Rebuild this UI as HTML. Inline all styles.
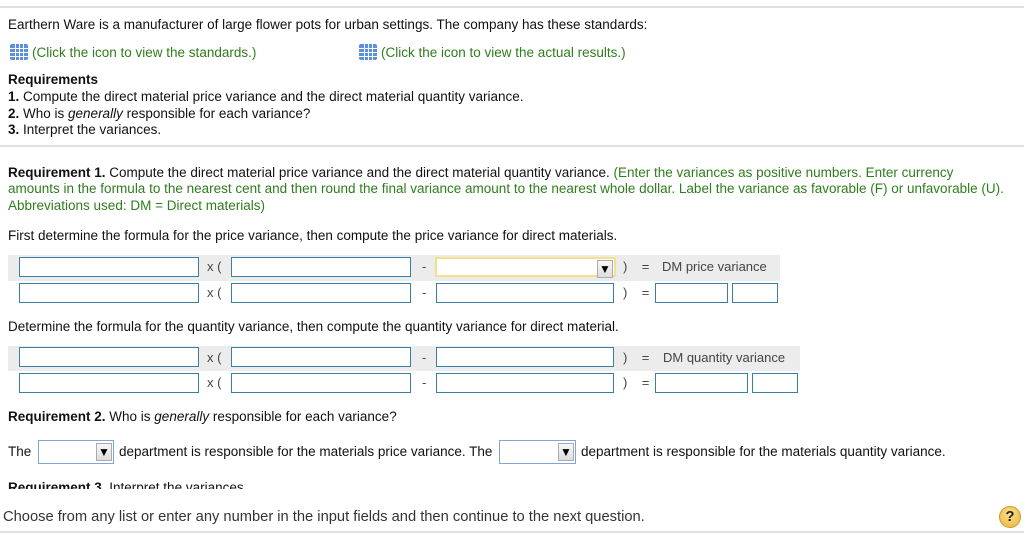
<!DOCTYPE html>
<html><head><meta charset="utf-8"><style>
*{margin:0;padding:0;box-sizing:border-box}
body{width:1024px;height:536px;position:relative;background:#fff;font-family:"Liberation Sans",Arial,sans-serif;font-size:13.5px;color:#111;overflow:hidden}
.a{position:absolute;white-space:nowrap;line-height:16px}
.g{color:#2f7d1c}
.hl{position:absolute;left:0;width:1024px;height:2px;background:#dde1e6}
.band{position:absolute;background:#ececec}
.in{position:absolute;height:20px;border:1px solid #3a7fa0;background:#fff}
.t{position:absolute;color:#444;line-height:16px;font-size:13px}
.ico{display:inline-block;width:18px;height:16px;background:#5b8fe0;border-radius:2px;vertical-align:-3px;margin-right:4px;background-image:linear-gradient(90deg,transparent 5px,#fff 5px,#fff 6px,transparent 6px,transparent 9px,#fff 9px,#fff 10px,transparent 10px,transparent 13px,#fff 13px,#fff 14px,transparent 14px),linear-gradient(transparent 4px,#fff 4px,#fff 5px,transparent 5px,transparent 8px,#fff 8px,#fff 9px,transparent 9px,transparent 12px,#fff 12px,#fff 13px,transparent 13px)}
.sel{position:absolute;height:24px;border:1px solid #7fa6d8;background:#fff}
.arr{position:absolute;right:1px;top:2px;width:16px;height:18px;background:linear-gradient(#f8f8f8,#ddd);border:1px solid #aaa;font-size:12px;text-align:center;line-height:16px;color:#000}
</style></head><body>
<div class="hl" style="top:6px"></div>
<div class="a" style="left:8px;top:17px">Earthern Ware is a manufacturer of large flower pots for urban settings. The company has these standards:</div>
<div class="a g" style="left:10px;top:44px"><span class="ico"></span>(Click the icon to view the standards.)</div>
<div class="a g" style="left:359px;top:44px"><span class="ico"></span>(Click the icon to view the actual results.)</div>
<div class="a" style="left:8px;top:72px"><b>Requirements</b></div>
<div class="a" style="left:8px;top:89px"><b>1.</b> Compute the direct material price variance and the direct material quantity variance.</div>
<div class="a" style="left:8px;top:106px"><b>2.</b> Who is <i>generally</i> responsible for each variance?</div>
<div class="a" style="left:8px;top:122px"><b>3.</b> Interpret the variances.</div>
<div class="hl" style="top:145px"></div>
<div class="a" style="left:8px;top:165px"><b>Requirement 1.</b> Compute the direct material price variance and the direct material quantity variance. <span class="g">(Enter the variances as positive numbers. Enter currency</span></div>
<div class="a g" style="left:8px;top:181px">amounts in the formula to the nearest cent and then round the final variance amount to the nearest whole dollar. Label the variance as favorable (F) or unfavorable (U).</div>
<div class="a g" style="left:8px;top:198px">Abbreviations used: DM = Direct materials)</div>
<div class="a" style="left:8px;top:228px">First determine the formula for the price variance, then compute the price variance for direct materials.</div>

<div class="band" style="left:8px;top:255px;width:772px;height:26px"></div>
<div class="in" style="left:19px;top:257px;width:180px"></div>
<div class="t" style="left:207px;top:259px">x (</div>
<div class="in" style="left:231px;top:257px;width:180px"></div>
<div class="t" style="left:422px;top:259px">-</div>
<div class="in" style="left:435px;top:257px;width:181px;border:2px solid #f3e08a"><div class="arr" style="top:1px">▼</div></div>
<div class="t" style="left:623px;top:259px">)&nbsp;&nbsp;&nbsp; =</div>
<div class="t" style="left:662px;top:259px">DM price variance</div>

<div class="in" style="left:19px;top:283px;width:180px"></div>
<div class="t" style="left:207px;top:285px">x (</div>
<div class="in" style="left:231px;top:283px;width:180px"></div>
<div class="t" style="left:422px;top:285px">-</div>
<div class="in" style="left:436px;top:283px;width:178px"></div>
<div class="t" style="left:623px;top:285px">)&nbsp;&nbsp;&nbsp; =</div>
<div class="in" style="left:655px;top:283px;width:73px"></div>
<div class="in" style="left:732px;top:283px;width:46px"></div>

<div class="a" style="left:8px;top:319px">Determine the formula for the quantity variance, then compute the quantity variance for direct material.</div>

<div class="band" style="left:8px;top:346px;width:792px;height:25px"></div>
<div class="in" style="left:19px;top:347px;width:180px"></div>
<div class="t" style="left:207px;top:350px">x (</div>
<div class="in" style="left:231px;top:347px;width:180px"></div>
<div class="t" style="left:422px;top:350px">-</div>
<div class="in" style="left:436px;top:347px;width:178px"></div>
<div class="t" style="left:623px;top:350px">)&nbsp;&nbsp;&nbsp; =</div>
<div class="t" style="left:663px;top:350px">DM quantity variance</div>

<div class="in" style="left:19px;top:373px;width:180px"></div>
<div class="t" style="left:207px;top:375px">x (</div>
<div class="in" style="left:231px;top:373px;width:180px"></div>
<div class="t" style="left:422px;top:375px">-</div>
<div class="in" style="left:436px;top:373px;width:178px"></div>
<div class="t" style="left:623px;top:375px">)&nbsp;&nbsp;&nbsp; =</div>
<div class="in" style="left:655px;top:373px;width:93px"></div>
<div class="in" style="left:752px;top:373px;width:46px"></div>

<div class="a" style="left:8px;top:409px"><b>Requirement 2.</b> Who is <i>generally</i> responsible for each variance?</div>
<div class="a" style="left:8px;top:444px">The</div>
<div class="sel" style="left:38px;top:440px;width:76px"><div class="arr">▼</div></div>
<div class="a" style="left:119px;top:444px">department is responsible for the materials price variance. The</div>
<div class="sel" style="left:499px;top:440px;width:77px"><div class="arr">▼</div></div>
<div class="a" style="left:581px;top:444px">department is responsible for the materials quantity variance.</div>
<div style="position:absolute;left:0;top:480px;width:600px;height:9px;overflow:hidden"><div class="a" style="left:8px;top:0px"><b>Requirement 3.</b> Interpret the variances.</div></div>
<div class="a" style="left:3px;top:509px;font-size:14.7px;color:#333">Choose from any list or enter any number in the input fields and then continue to the next question.</div>
<div style="position:absolute;left:999px;top:506px;width:22px;height:22px;border-radius:50%;background:radial-gradient(circle at 50% 35%,#fde08a,#e8b440);border:1px solid #c89a2a;text-align:center;font-weight:bold;font-size:15px;line-height:20px;color:#222">?</div>
<div class="hl" style="top:531px"></div>
</body></html>
